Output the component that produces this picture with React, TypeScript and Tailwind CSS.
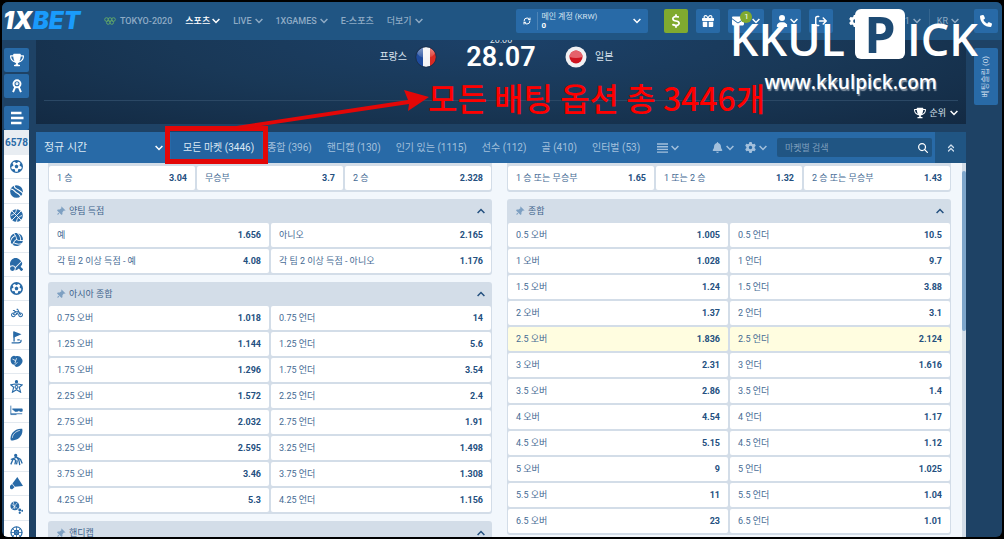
import React from "react";
import {
  FaTrophy, FaDollarSign, FaGift, FaEnvelope, FaUser, FaGear, FaPhone, FaBell,
  FaMagnifyingGlass, FaThumbtack, FaArrowRightFromBracket, FaFutbol, FaRegFutbol,
  FaVolleyball, FaTableTennisPaddleBall, FaBicycle,
} from "react-icons/fa6";
import { ChevronsUp, RefreshCw } from "lucide-react";

type Bet = [string, string];

function Down({ className = "" }: { className?: string }) {
  return (
    <svg viewBox="0 0 8 6" className={`h-1.5 w-2 shrink-0 ${className}`} fill="none" stroke="currentColor" strokeWidth="1.500">
      <path d="M.6 1L4 4.500 7.400 1" />
    </svg>
  );
}

function Cells({ bets, cols }: { bets: Bet[]; cols: string }) {
  return (
    <div className={`grid gap-x-0.5 px-px ${cols}`}>
      {bets.map(([name, odd]) => (
        <button
          key={name}
          className={`mb-0.5 flex h-6 min-w-0 items-center justify-between rounded-xs px-2 text-[9px] whitespace-nowrap ${
            name.startsWith("2.5 ") ? "bg-[#fffde0]" : "bg-white"
          }`}
        >
          <span className="text-[#466b94]">{name}</span>
          <span className="font-bold text-[#24507f]">{odd}</span>
        </button>
      ))}
    </div>
  );
}

function Market({ title, bets }: { title: string; bets: Bet[] }) {
  return (
    <section className="shrink-0 rounded-[3px] bg-[#d3dde8]">
      <h2>
        <button className="flex h-6 w-full items-center px-2 text-[9px]">
          <FaThumbtack className="mr-1 size-[9px] rotate-45 text-[#7ea0c2]" />
          <span className="text-[#3f648c]">{title}</span>
          <Down className="-mr-px ml-auto rotate-180 text-[#24507f]" />
        </button>
      </h2>
      <Cells bets={bets} cols="grid-cols-2" />
    </section>
  );
}

const pairs = (list: [string, string, string][]): Bet[] =>
  list.flatMap(([n, a, b]) => [[`${n} 오버`, a], [`${n} 언더`, b]] as Bet[]);

const asian = pairs([
  ["0.75", "1.018", "14"], ["1.25", "1.144", "5.6"], ["1.75", "1.296", "3.54"],
  ["2.25", "1.572", "2.4"], ["2.75", "2.032", "1.91"], ["3.25", "2.595", "1.498"],
  ["3.75", "3.46", "1.308"], ["4.25", "5.3", "1.156"],
]);

const totals = pairs([
  ["0.5", "1.005", "10.5"], ["1", "1.028", "9.7"], ["1.5", "1.24", "3.88"],
  ["2", "1.37", "3.1"], ["2.5", "1.836", "2.124"], ["3", "2.31", "1.616"],
  ["3.5", "2.86", "1.4"], ["4", "4.54", "1.17"], ["4.5", "5.15", "1.12"],
  ["5", "9", "1.025"], ["5.5", "11", "1.04"], ["6.5", "23", "1.01"],
]);

const svg = "size-[13px]";

function Tennis() {
  return (
    <svg viewBox="0 0 16 16" className={svg}>
      <circle cx="8" cy="8" r="7.800" fill="currentColor" />
      <path d="M1 5c4 0 4 3 7 4.500S13 12 13 15M5 0c0 4 2 4 4.500 5.500S15 8 16 11" fill="none" stroke="#fff" strokeWidth="1.300" />
    </svg>
  );
}
function Basket() {
  return (
    <svg viewBox="0 0 16 16" className={svg}>
      <circle cx="8" cy="8" r="7.800" fill="currentColor" />
      <path d="M2 14L14 2M2.500 2.500l11 11M1 8c4-1 7-4 7-8M15 8c-4 1-7 4-7 8" fill="none" stroke="#fff" strokeWidth="1.100" />
    </svg>
  );
}
function Golf() {
  return (
    <svg viewBox="0 0 16 16" className={svg} fill="none" stroke="currentColor" strokeWidth="1.600">
      <path d="M5 1v12" />
      <path d="M5 1.500l7 2.500-7 3z" fill="currentColor" />
      <path d="M2 14.500h8c3 0 4-1 3.500-3.500M9 11h3" />
    </svg>
  );
}
function Glove() {
  return (
    <svg viewBox="0 0 16 16" className={svg}>
      <path d="M1 4c1-3 4-4 6-2.500 3-1 6 0 7 2.500 2 2 2 5 0 7-2 3-5 4-7 3.500L5 12C2 12 0 8 1 4z" fill="currentColor" />
      <path d="M3 5l4 2-1 3M8 4l-1 3M6 12l3-3" stroke="#fff" fill="none" />
    </svg>
  );
}
function Handball() {
  return (
    <svg viewBox="0 0 16 16" className={svg} fill="none" stroke="currentColor" strokeWidth="1.400">
      <circle cx="8" cy="2" r="1.300" fill="currentColor" />
      <path d="M1 6l5-1h4l5 1-3.500 3L13 15l-5-3-5 3 1.500-6z" />
      <circle cx="8" cy="8.500" r="1.800" />
    </svg>
  );
}
function Goggles() {
  return (
    <svg viewBox="0 0 16 16" className={svg} fill="none" stroke="currentColor">
      <path d="M1 2v11h7M1 12h14" strokeWidth="1" />
      <path d="M3 6h12v3h-3l-1-1-2 1H6L5 8z" fill="currentColor" />
    </svg>
  );
}
function Rugby() {
  return (
    <svg viewBox="0 0 16 16" className={svg}>
      <path d="M1 15C-1 8 6 0 15 1c2 8-6 16-14 14z" fill="currentColor" />
      <path d="M3 12C3 8 7 4 12 3" stroke="#fff" strokeWidth=".9" fill="none" />
    </svg>
  );
}
function Martial() {
  return (
    <svg viewBox="0 0 16 16" className={svg} fill="none" stroke="currentColor" strokeWidth="1.600">
      <circle cx="7" cy="3" r="1.200" fill="currentColor" />
      <path d="M1 14l3-7 4-2 3 4 1 6M4 7l3 2-1 5M8 5l5 3 2 5M1 8l3-1M9 9l-1 5" />
    </svg>
  );
}
function Shuttle() {
  return (
    <svg viewBox="0 0 16 16" className={svg} fill="currentColor">
      <path d="M9 0l7 11-10 1-3-4z" />
      <path d="M2.500 8.500l3 4-2 2a2.500 2.500 0 0 1-3-4z" />
    </svg>
  );
}
function BallFlower() {
  return (
    <svg viewBox="0 0 16 16" className={svg} fill="currentColor">
      <circle cx="6" cy="6" r="5.500" />
      <path d="M2 4l7 5M4 1l2 9M9 2L3 10" stroke="#fff" strokeWidth=".8" />
      <circle cx="12" cy="11" r="1.800" /><circle cx="15" cy="12" r="1.200" /><circle cx="12" cy="14.500" r="1.400" />
    </svg>
  );
}
function Lattice() {
  return (
    <svg viewBox="0 0 16 16" className={svg} fill="none" stroke="currentColor" strokeWidth="1.500">
      <circle cx="8" cy="8" r="6.800" />
      <circle cx="8" cy="8" r="2.500" />
      <path d="M8 1v14M1 8h14M3 3l10 10M13 3L3 13" strokeWidth="1" />
    </svg>
  );
}

const sports: [string, React.ReactNode][] = [
  ["축구", <FaRegFutbol className={svg} />],
  ["테니스", <Tennis />],
  ["농구", <Basket />],
  ["배구", <FaVolleyball className={svg} />],
  ["탁구", <FaTableTennisPaddleBall className={`${svg} -scale-x-100`} />],
  ["풋살", <FaFutbol className={svg} />],
  ["사이클", <FaBicycle className="size-3" />],
  ["골프", <Golf />],
  ["복싱", <Glove />],
  ["핸드볼", <Handball />],
  ["수영", <Goggles />],
  ["럭비", <Rugby />],
  ["유도", <Martial />],
  ["배드민턴", <Shuttle />],
  ["수구", <BallFlower />],
  ["기타", <Lattice />],
];

function Rings() {
  return (
    <svg viewBox="0 0 24 16" className="mr-1 h-2 w-3" fill="none" stroke="#5fa56a" strokeWidth="2">
      <circle cx="5" cy="5" r="3.600" /><circle cx="12" cy="5" r="3.600" /><circle cx="19" cy="5" r="3.600" />
      <circle cx="8.500" cy="11" r="3.600" /><circle cx="15.500" cy="11" r="3.600" />
    </svg>
  );
}

function France() {
  return (
    <svg viewBox="0 0 22 22" className="size-[22px]">
      <defs>
        <clipPath id="fr"><circle cx="11" cy="11" r="10" /></clipPath>
        <linearGradient id="gloss" x1="0" y1="0" x2="0" y2="1">
          <stop offset="0" stopColor="#fff" stopOpacity=".5" />
          <stop offset="1" stopColor="#fff" stopOpacity=".1" />
        </linearGradient>
      </defs>
      <g clipPath="url(#fr)">
        <path d="M0 0h8v22H0z" fill="#1e4a9c" />
        <path d="M8 0h7v22H8z" fill="#f4f4f6" />
        <path d="M15 0h7v22h-7z" fill="#d92a22" />
        <ellipse cx="11" cy="6" rx="9" ry="6" fill="url(#gloss)" />
      </g>
      <circle cx="11" cy="11" r="10.300" fill="none" stroke="#1b2f49" strokeWidth=".8" />
    </svg>
  );
}

function Japan() {
  return (
    <svg viewBox="0 0 22 22" className="size-[22px]">
      <circle cx="11" cy="11" r="10.500" fill="#f1f1f3" />
      <circle cx="11" cy="11" r="6.500" fill="#cf1420" />
      <path d="M4.500 11a6.500 6.500 0 0 1 13 0q-6.500 2-13 0z" fill="#e5626b" />
    </svg>
  );
}

const tabs = ["종합 (396)", "핸디캡 (130)", "인기 있는 (1115)", "선수 (112)", "골 (410)", "인터벌 (53)"];
const iconBtn = "flex h-6 items-center justify-center rounded-xs bg-[#286aa7] text-white";

export default function App() {
  return (
    <div className="h-screen bg-black p-0.5 font-[Roboto,'Noto_Sans_CJK_KR',sans-serif] text-[10px] leading-3">
      <div className="relative flex h-full flex-col overflow-hidden rounded-md bg-[#1e4265]">
        <header className="flex h-[38px] shrink-0 items-center bg-[#205583] pr-1 text-[9px] whitespace-nowrap text-[#8fabc5]">
          <a href="#home" className="w-[102px] shrink-0 pl-px font-[Inter,sans-serif] text-2xl font-black text-white italic">
            1X<span className="text-[#1a9bfc]">BET</span>
          </a>
          <nav className="flex items-center gap-[13px] font-medium">
            <a href="#tokyo" className="flex items-center"><Rings />TOKYO-2020</a>
            <a href="#sports" className="flex items-center gap-0.5 text-white">스포츠<Down /></a>
            <a href="#live" className="flex items-center gap-[3px]">LIVE<Down /></a>
            <a href="#games" className="flex items-center gap-[3px]">1XGAMES<Down /></a>
            <a href="#esports">E-스포츠</a>
            <a href="#more" className="flex items-center gap-[3px]">더보기<Down /></a>
          </nav>
          <div className="ml-auto flex items-center gap-2">
            <button className="mr-2 flex h-6 w-[132px] items-center rounded-xs bg-[#286aa7] px-[7px] text-left text-[8px] leading-[9px] text-[#d5e3f0]">
              <RefreshCw className="size-2 text-white" strokeWidth={3} />
              <span className="ml-1.5 border-l border-[#4d84b7] pl-[3px]">
                <span className="block">메인 계정 (KRW)</span>
                <span className="block font-bold text-white">0</span>
              </span>
              <Down className="ml-auto text-white" />
            </button>
            <button aria-label="입금" className="flex size-6 items-center justify-center rounded-xs bg-[#80aa2f] text-white"><FaDollarSign className="size-3.5" /></button>
            <button aria-label="선물" className={`${iconBtn} w-6`}><FaGift className="size-3" /></button>
            <button aria-label="메시지" className={`${iconBtn} relative w-9 gap-2`}>
              <FaEnvelope className="size-3" /><Down />
              <span className="absolute top-0.5 left-3 size-3 rounded-full bg-[#80aa2f] text-[8px] leading-3">1</span>
            </button>
            <button aria-label="계정" className={`${iconBtn} w-[29px] gap-0.5`}><FaUser className="size-3" /><Down /></button>
            <button aria-label="로그아웃" className={`${iconBtn} w-6`}><FaArrowRightFromBracket className="size-3" /></button>
            <button aria-label="설정" className="ml-2 flex items-center gap-0.5"><FaGear className="size-3 text-white" /><Down /></button>
            <button className="flex h-6 items-center gap-[3px] border-l border-[#34658f] pl-[7px]">11:31<Down /></button>
            <button className="mr-[7px] flex h-6 items-center gap-[3px] border-l border-[#34658f] pl-[7px]">KR<Down /></button>
            <button aria-label="전화" className={`${iconBtn} w-6`}><FaPhone className="size-3" /></button>
          </div>
        </header>

        <div className="flex min-h-0 flex-1">
          <aside className="ml-0.5 flex w-[25px] shrink-0 flex-col pt-2 text-[#286aa7]">
            <button aria-label="우승" className={`${iconBtn} shrink-0`}><FaTrophy className="size-3.5" /></button>
            <button aria-label="순위표" className={`${iconBtn} mt-0.5 shrink-0`}>
              <svg viewBox="0 0 16 16" className="size-3.5" fill="none" stroke="currentColor" strokeWidth="2.200">
                <circle cx="8" cy="5.500" r="4" /><circle cx="8" cy="5.500" r=".6" /><path d="M6 9l-2.500 6M10 9l2.500 6" />
              </svg>
            </button>
            <button aria-label="메뉴" className={`${iconBtn} mt-2 shrink-0`}>
              <svg viewBox="0 0 14 14" className="size-3.5" stroke="currentColor" strokeWidth="2.400"><path d="M1 2h10.500M1 7h12.500M1 12h10.500" /></svg>
            </button>
            <div className="flex h-[25px] shrink-0 items-center justify-center bg-[#e8edf2] font-bold">6578</div>
            <div className="-mb-2 flex min-h-0 flex-1 flex-col bg-white">
              {sports.map(([name, icon]) => (
                <button key={name} aria-label={name} className="flex min-h-0 flex-1 items-center justify-center border-b border-[#e3e9ef]">{icon}</button>
              ))}
            </div>
          </aside>

          <main className="ml-[7px] flex min-w-0 flex-1 flex-col">
            <section className="flex h-[84px] shrink-0 flex-col overflow-hidden bg-[radial-gradient(ellipse_at_50%_0%,#1c4169_0%,#193857_50%,#132a43_100%)] text-[#dbe5ef]">
              <div className="mx-2 grid h-[61px] grid-cols-[1fr_auto_1fr] items-start border-b border-[#2b4865]">
                <div className="mt-1.5 flex items-center justify-end gap-2">프랑스<France /></div>
                <div className="-mt-1 w-[128px] text-center">
                  <div className="h-[9px] text-[9px] leading-[9px]">20:00</div>
                  <div className="text-[27px] leading-6 font-semibold text-white">28.07</div>
                </div>
                <div className="mt-1.5 flex items-center gap-2"><Japan />일본</div>
              </div>
              <button className="mr-2 ml-auto flex h-[23px] items-center gap-[3px] text-[9px]"><FaTrophy className="size-3 text-white" />순위<Down className="ml-px text-white" /></button>
            </section>

            <div className="relative mt-2 flex h-[31px] shrink-0 items-stretch bg-[#286aa7] whitespace-nowrap text-[#a3c0dc]">
              <label className="flex w-[135px] shrink-0 items-center px-2 text-[#dbe8f4]">
                <select aria-label="시간" className="min-w-0 flex-1 appearance-none bg-transparent text-[11px]"><option>정규 시간</option></select>
                <Down className="text-white" />
              </label>
              <button className="relative bg-[#2463a0] pr-2 pl-3 text-[#dbe8f4]">
                모든 마켓 (3446)
                <span className="absolute -inset-x-1.5 -top-1.5 -bottom-px border-5 border-[#e30707]" />
              </button>
              <div className="ml-[5px] flex gap-[15px]">
                {tabs.map((t) => <button key={t}>{t}</button>)}
              </div>
              <div className="ml-auto flex items-center">
                <button aria-label="보기" className="flex items-center gap-[3px]">
                  <svg viewBox="0 0 11 10" className="h-2.5 w-[11px]" stroke="currentColor" strokeWidth="1.400"><path d="M0 1h11M0 3.700h11M0 6.400h11M0 9.100h11" /></svg><Down />
                </button>
                <button aria-label="알림" className="ml-[33px] flex items-center gap-[3px]"><FaBell className="size-[11px]" /><Down /></button>
                <button aria-label="옵션" className="ml-[11px] flex items-center gap-[3px]"><FaGear className="size-[11px]" /><Down /></button>
                <label className="ml-2.5 flex h-[19px] w-[155px] items-center rounded-xs bg-[#205583] px-2">
                  <input aria-label="마켓별 검색" placeholder="마켓별 검색" className="min-w-0 flex-1 bg-transparent text-[9px] placeholder:text-[#7f9fbd]" />
                  <FaMagnifyingGlass className="-mr-1 size-2.5 text-white" />
                </label>
              </div>
              <button aria-label="접기" className="ml-[3px] flex w-[31px] items-center justify-center bg-[#205583] text-[#cfdfee]"><ChevronsUp className="size-3" strokeWidth={2.5} /></button>
            </div>

            <div className="flex min-h-0 flex-1 overflow-hidden bg-[#f2f7fc]">
              <div className="grid min-w-0 flex-1 grid-cols-2 gap-[15px] pr-[11px] pl-3">
                <div className="flex min-w-0 flex-col gap-[7px]">
                  <section className="rounded-b-[3px] bg-[#d3dde8] pt-[3px]">
                    <Cells cols="grid-cols-3" bets={[["1 승", "3.04"], ["무승부", "3.7"], ["2 승", "2.328"]]} />
                  </section>
                  <Market title="양팀 득점" bets={[["예", "1.656"], ["아니오", "2.165"], ["각 팀 2 이상 득점 - 예", "4.08"], ["각 팀 2 이상 득점 - 아니오", "1.176"]]} />
                  <Market title="아시아 종합" bets={asian} />
                  <Market title="핸디캡" bets={[]} />
                </div>
                <div className="flex min-w-0 flex-col gap-[7px]">
                  <section className="rounded-b-[3px] bg-[#d3dde8] pt-[3px]">
                    <Cells cols="grid-cols-3" bets={[["1 승 또는 무승부", "1.65"], ["1 또는 2 승", "1.32"], ["2 승 또는 무승부", "1.43"]]} />
                  </section>
                  <Market title="종합" bets={totals} />
                </div>
              </div>
              <div className="w-1 shrink-0 bg-[#d3dde8] pt-2"><div className="h-40 rounded bg-[#7ea6cb]" /></div>
            </div>
          </main>

          <aside className="w-9 shrink-0 pt-2 pl-2">
            <button className="flex h-[57px] w-6 items-center justify-center rounded-xs bg-[#286aa7] text-[#cfdfee]">
              <span className="rotate-180 text-[8px] whitespace-nowrap [text-orientation:sideways] [writing-mode:vertical-rl]">베팅슬립 (0)</span>
            </button>
          </aside>
        </div>

        <svg viewBox="0 0 200 42" className="pointer-events-none absolute top-[87px] left-[228px] h-[42px] w-[200px]">
          <path d="M0 38L178 11L174 1L199 8L178 22L179 15L10 40z" fill="#e30707" />
        </svg>
        <p className="pointer-events-none absolute top-[75px] left-[426px] font-['Noto_Sans_CJK_KR',sans-serif] text-[32px] leading-10 font-medium whitespace-nowrap text-[#ff0000]">모든 배팅 옵션 총 3446개</p>
        <div className="pointer-events-none absolute top-[7px] right-6 flex items-start font-['Open_Sans',sans-serif] text-[45px] leading-[60px] font-semibold text-white">
          <span>KKUL</span>
          <span className="mr-0.5 ml-2.5 flex size-[50px] items-center justify-center rounded-md bg-white text-[50px] leading-[50px] font-bold text-[#1d4a73]">P</span>
          <span>ICK</span>
        </div>
        <p className="pointer-events-none absolute top-[66px] right-[65px] font-['Open_Sans',sans-serif] text-[19px] leading-7 font-semibold text-white [text-shadow:1px_2px_1px_#8796a6]">www.kkulpick.com</p>
      </div>
    </div>
  );
}
